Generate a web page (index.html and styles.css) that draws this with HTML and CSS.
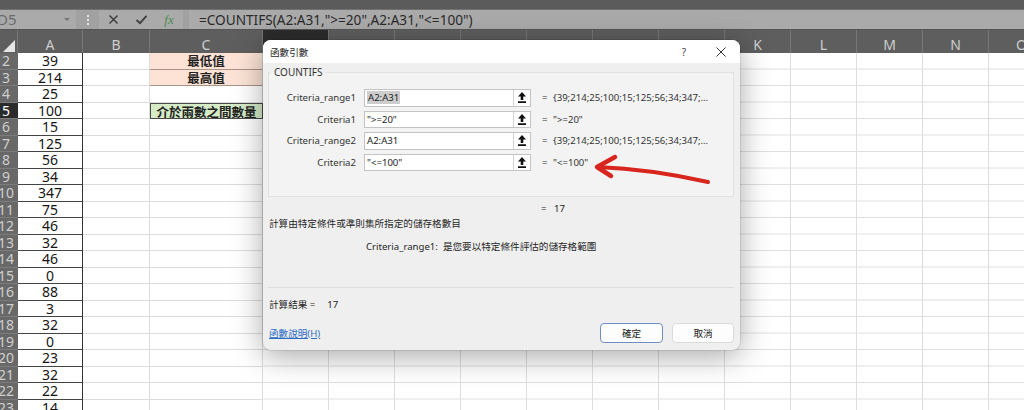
FILE: index.html
```html
<!DOCTYPE html>
<html lang="zh-Hant">
<head>
<meta charset="utf-8">
<title>COUNTIFS 函數引數</title>
<link rel="stylesheet" href="styles.css">
</head>
<body>
<div class="app">
  <div class="topstrip"></div>
  <div class="fbar">
    <div class="namebox"><span class="nb-text">D5</span><span class="caret"></span></div>
    <div class="grip"><i></i><i></i><i></i></div>
    <div class="tools">
      <span class="tool"><svg width="11" height="11" viewBox="0 0 11 11"><path d="M1.5 1.5 L9.5 9.5 M9.5 1.5 L1.5 9.5" stroke="#3e3e3e" stroke-width="1.5" fill="none"/></svg></span>
      <span class="tool"><svg width="13" height="11" viewBox="0 0 13 11"><path d="M1.5 6 L5 9.2 L11.5 1.8" stroke="#3e3e3e" stroke-width="1.8" fill="none"/></svg></span>
      <span class="tool fx">fx</span>
    </div>
    <div class="formula">=COUNTIFS(A2:A31,"&gt;=20",A2:A31,"&lt;=100")</div>
  </div>

  <div class="sheet">
    <div class="corner"><span class="tri"></span></div>
    <div class="ch">A</div>
    <div class="ch">B</div>
    <div class="ch">C</div>
    <div class="ch-rest">
      <div class="ch active">D</div><div class="ch">E</div><div class="ch">F</div><div class="ch">G</div>
      <div class="ch">H</div><div class="ch">I</div><div class="ch">J</div><div class="ch">K</div>
      <div class="ch">L</div><div class="ch">M</div><div class="ch">N</div><div class="ch">O</div>
    </div>
    <div class="grid-rest"></div>

    <div class="rh"><span>2</span></div><div class="a">39</div><div class="b"></div><div class="c pink">最低值</div>
    <div class="rh"><span>3</span></div><div class="a">214</div><div class="b"></div><div class="c pink">最高值</div>
    <div class="rh"><span>4</span></div><div class="a">25</div><div class="b"></div><div class="c"></div>
    <div class="rh active"><span>5</span></div><div class="a">100</div><div class="b"></div><div class="c green">介於兩數之間數量</div>
    <div class="rh"><span>6</span></div><div class="a">15</div><div class="b"></div><div class="c"></div>
    <div class="rh"><span>7</span></div><div class="a">125</div><div class="b"></div><div class="c"></div>
    <div class="rh"><span>8</span></div><div class="a">56</div><div class="b"></div><div class="c"></div>
    <div class="rh"><span>9</span></div><div class="a">34</div><div class="b"></div><div class="c"></div>
    <div class="rh"><span>10</span></div><div class="a">347</div><div class="b"></div><div class="c"></div>
    <div class="rh"><span>11</span></div><div class="a">75</div><div class="b"></div><div class="c"></div>
    <div class="rh"><span>12</span></div><div class="a">46</div><div class="b"></div><div class="c"></div>
    <div class="rh"><span>13</span></div><div class="a">32</div><div class="b"></div><div class="c"></div>
    <div class="rh"><span>14</span></div><div class="a">46</div><div class="b"></div><div class="c"></div>
    <div class="rh"><span>15</span></div><div class="a">0</div><div class="b"></div><div class="c"></div>
    <div class="rh"><span>16</span></div><div class="a">88</div><div class="b"></div><div class="c"></div>
    <div class="rh"><span>17</span></div><div class="a">3</div><div class="b"></div><div class="c"></div>
    <div class="rh"><span>18</span></div><div class="a">32</div><div class="b"></div><div class="c"></div>
    <div class="rh"><span>19</span></div><div class="a">0</div><div class="b"></div><div class="c"></div>
    <div class="rh"><span>20</span></div><div class="a">23</div><div class="b"></div><div class="c"></div>
    <div class="rh"><span>21</span></div><div class="a">32</div><div class="b"></div><div class="c"></div>
    <div class="rh"><span>22</span></div><div class="a">22</div><div class="b"></div><div class="c"></div>
    <div class="rh"><span>23</span></div><div class="a">14</div><div class="b"></div><div class="c"></div>
  </div>

  <div class="dialog">
    <div class="dtitle">
      <span class="dt-text">函數引數</span>
      <span class="help">?</span>
      <span class="close"><svg width="10" height="10" viewBox="0 0 10 10"><path d="M0.5 0.5 L9.5 9.5 M9.5 0.5 L0.5 9.5" stroke="#333" stroke-width="1" fill="none"/></svg></span>
    </div>
    <div class="dbody">
      <fieldset class="args">
        <legend>COUNTIFS</legend>
        <div class="arggrid">
          <label>Criteria_range1</label>
          <div class="inp"><span class="val"><span class="sel">A2:A31</span></span><span class="pick"><svg width="8" height="11" viewBox="0 0 8 11"><path d="M4 0 L8 4.5 L5.3 4.5 L5.3 8 L2.7 8 L2.7 4.5 L0 4.5 Z M0 9.3 H8 V11 H0 Z" fill="#111"/></svg></span></div>
          <div class="res"><span class="eq">=</span>{39;214;25;100;15;125;56;34;347;…</div>

          <label>Criteria1</label>
          <div class="inp"><span class="val">"&gt;=20"</span><span class="pick"><svg width="8" height="11" viewBox="0 0 8 11"><path d="M4 0 L8 4.5 L5.3 4.5 L5.3 8 L2.7 8 L2.7 4.5 L0 4.5 Z M0 9.3 H8 V11 H0 Z" fill="#111"/></svg></span></div>
          <div class="res"><span class="eq">=</span>"&gt;=20"</div>

          <label>Criteria_range2</label>
          <div class="inp"><span class="val">A2:A31</span><span class="pick"><svg width="8" height="11" viewBox="0 0 8 11"><path d="M4 0 L8 4.5 L5.3 4.5 L5.3 8 L2.7 8 L2.7 4.5 L0 4.5 Z M0 9.3 H8 V11 H0 Z" fill="#111"/></svg></span></div>
          <div class="res"><span class="eq">=</span>{39;214;25;100;15;125;56;34;347;…</div>

          <label>Criteria2</label>
          <div class="inp"><span class="val">"&lt;=100"</span><span class="pick"><svg width="8" height="11" viewBox="0 0 8 11"><path d="M4 0 L8 4.5 L5.3 4.5 L5.3 8 L2.7 8 L2.7 4.5 L0 4.5 Z M0 9.3 H8 V11 H0 Z" fill="#111"/></svg></span></div>
          <div class="res"><span class="eq">=</span>"&lt;=100"</div>
        </div>
      </fieldset>
      <div class="total"><span class="eq">=</span>17</div>
      <p class="desc">計算由特定條件或準則集所指定的儲存格數目</p>
      <p class="argdesc"><span>Criteria_range1:</span><span class="argtext">是您要以特定條件評估的儲存格範圍</span></p>
      <hr class="sep">
      <div class="result">計算結果 =<span class="rv">17</span></div>
      <div class="actions">
        <a class="helplink" href="#">函數說明(H)</a>
        <div class="btns">
          <button class="btn ok">確定</button>
          <button class="btn">取消</button>
        </div>
      </div>
    </div>
  </div>

  <svg class="arrow" width="130" height="40" viewBox="0 0 130 40">
    <path d="M8 17 Q 60 19 118 32" stroke="#d8251d" stroke-width="4" fill="none" stroke-linecap="round"/>
    <path d="M25 7 L7 17 L21 26" stroke="#d8251d" stroke-width="4.5" fill="none" stroke-linecap="round" stroke-linejoin="round"/>
  </svg>
</div>
</body>
</html>
```

FILE: styles.css
```css
* { box-sizing: border-box; }

body {
  margin: 0;
  background: #fff;
  font-family: "Noto Sans", "Noto Sans CJK TC", sans-serif;
}

.app {
  position: relative;
  width: 1024px;
  height: 410px;
  overflow: hidden;
}

/* top strip + formula bar */
.topstrip {
  height: 10px;
  background: #5b5b5b;
  border-bottom: 1px solid #707070;
}

.fbar {
  height: 20px;
  background: #a1a1a1;
  border-bottom: 1px solid #555;
  display: flex;
}

.namebox {
  width: 76px;
  background: #aaaaaa;
  display: flex;
  align-items: center;
  justify-content: space-between;
  overflow: hidden;
  padding-right: 6px;
}

.nb-text {
  margin-left: -3px;
  font-size: 15px;
  color: #6a6a6a;
  line-height: 19px;
}

.caret {
  width: 0;
  height: 0;
  border-left: 3px solid transparent;
  border-right: 3px solid transparent;
  border-top: 3px solid #777;
}

.grip {
  width: 23px;
  display: flex;
  flex-direction: column;
  align-items: center;
  justify-content: center;
  gap: 2px;
}

.grip i {
  width: 2px;
  height: 2px;
  background: #e8e8e8;
}

.tools {
  width: 84px;
  background: #aaaaaa;
  display: flex;
}

.tool {
  width: 28px;
  display: flex;
  align-items: center;
  justify-content: center;
}

.fx {
  font-family: "Liberation Serif", serif;
  font-style: italic;
  font-size: 13px;
  color: #4d8a4d;
}

.formula {
  flex: 1;
  margin-left: 6px;
  background: #aaaaaa;
  padding-left: 10px;
  font-size: 13.6px;
  line-height: 19px;
  color: #2a2a2a;
  white-space: nowrap;
}

/* sheet */
.sheet {
  display: grid;
  grid-template-columns: 18px 65px 67px 113px 1fr;
  grid-template-rows: 23px;
  grid-auto-rows: 16.5px;
}

.corner {
  background: #5e5e5e;
  border-right: 1px solid #777;
  position: relative;
}

.tri {
  position: absolute;
  right: 2px;
  bottom: 1px;
  width: 0;
  height: 0;
  border-left: 12px solid transparent;
  border-bottom: 12px solid #e6e6e6;
}

.ch {
  background: #5e5e5e;
  color: #cdcdcd;
  font-size: 14px;
  padding-top: 6px;
  line-height: 17px;
  text-align: center;
  border-right: 1px solid #777;
}

.ch-rest {
  display: flex;
  overflow: hidden;
}

.ch-rest .ch {
  flex: 0 0 66px;
}

.ch.active {
  background: #2c2c2c;
}

.grid-rest {
  grid-column: 5;
  grid-row: 2 / span 22;
  background-image:
    linear-gradient(to right, transparent 65px, #dedede 65px, #dedede 66px),
    linear-gradient(to bottom, transparent 15.5px, #dedede 15.5px, #dedede 16.5px);
  background-size: 66px 100%, 100% 16.5px;
}

.rh {
  background: #686868;
  border-bottom: 1px solid #7c7c7c;
  overflow: hidden;
  color: #cfcfcf;
  font-size: 14px;
  line-height: 16px;
}

.rh span {
  display: block;
  width: 24px;
  margin-left: -6px;
  text-align: center;
}

.rh.active {
  background: #2b2b2b;
  color: #fff;
}

.a {
  background: #fff;
  border-right: 1px solid #333;
  border-bottom: 1px solid #444;
  font-size: 14px;
  line-height: 15.5px;
  text-align: center;
  color: #151515;
}

.b {
  border-right: 1px solid #dcdcdc;
  border-bottom: 1px solid #dcdcdc;
}

.c {
  border-right: 1px solid #dcdcdc;
  border-bottom: 1px solid #dcdcdc;
  font-family: "Noto Sans CJK TC", sans-serif;
  font-weight: bold;
  font-size: 12.5px;
  line-height: 15px;
  text-align: center;
  color: #222;
}

.c.pink {
  background: #fce3d5;
  border-bottom-color: #a99286;
}

.c.green {
  background: #d4ebc6;
  border: 1px solid #4a4a4a;
}

/* dialog */
.dialog {
  position: absolute;
  left: 263px;
  top: 40px;
  width: 477px;
  height: 310px;
  border-radius: 8px;
  background: #efefef;
  overflow: hidden;
  box-shadow: 0 6px 30px rgba(0, 0, 0, 0.35), 0 0 0 1px rgba(0, 0, 0, 0.08);
  font-size: 9.6px;
  color: #1f1f1f;
}

.dtitle {
  height: 23px;
  background: #fff;
  display: flex;
  align-items: center;
  padding: 0 9px 0 7px;
}

.dt-text {
  flex: 1;
}

.help {
  width: 20px;
  text-align: center;
  font-size: 10px;
  color: #444;
}

.close {
  width: 20px;
  margin-left: 17px;
  display: flex;
  justify-content: center;
}

.dbody {
  padding: 0 6px 0 5px;
}

.args {
  margin: 2px 0 0;
  padding: 10px 0 25px;
  border: 1px solid #e0e0e0;
  background: #f3f3f3;
  min-width: 0;
}

.args legend {
  padding: 0 4px;
  margin-left: 1px;
  font-size: 10px;
  line-height: 14px;
  color: #333;
}

.arggrid {
  display: grid;
  grid-template-columns: 87px 167px 1fr;
  grid-auto-rows: 17.5px;
  column-gap: 8px;
  row-gap: 4px;
  align-items: center;
}

.arggrid label {
  text-align: right;
  color: #333;
}

.inp {
  height: 17.5px;
  display: flex;
  background: #fff;
  border: 1px solid #c3c3c3;
}

.val {
  flex: 1;
  padding-left: 2px;
  line-height: 15px;
  color: #222;
  white-space: nowrap;
}

.sel {
  background: #cdcdcd;
  padding: 0 1px;
}

.pick {
  width: 17px;
  border-left: 1px solid #d3d3d3;
  display: flex;
  align-items: center;
  justify-content: center;
}

.res {
  padding-left: 3px;
  white-space: nowrap;
  overflow: hidden;
  color: #333;
}

.eq {
  display: inline-block;
  width: 11px;
}

.total {
  margin-top: 5px;
  padding-left: 273px;
  line-height: 14px;
}

.total .eq {
  width: 13px;
}

.desc {
  margin: 1px 0 0;
  padding-left: 1px;
  line-height: 14px;
}

.argdesc {
  margin: 9px 0 0;
  padding-left: 98px;
  line-height: 14px;
  display: flex;
  gap: 5px;
}

.sep {
  margin: 33px 0 0;
  border: none;
  border-top: 1px solid #dcdcdc;
}

.result {
  margin-top: 10px;
  padding-left: 1px;
  line-height: 14px;
}

.rv {
  margin-left: 12px;
}

.actions {
  margin-top: 11px;
  display: flex;
  align-items: center;
  justify-content: space-between;
  padding-left: 1px;
}

.helplink {
  color: #2d6cc6;
  text-decoration: underline;
}

.btns {
  display: flex;
  gap: 9px;
}

.btn {
  width: 62px;
  height: 20px;
  border: 1px solid #dadada;
  border-radius: 4px;
  background: #fdfdfd;
  font-family: inherit;
  font-size: 9.6px;
  color: #222;
  padding: 0;
}

.btn.ok {
  width: 63px;
  border-color: #6f8fc4;
}

.arrow {
  position: absolute;
  left: 590px;
  top: 150px;
}
```
